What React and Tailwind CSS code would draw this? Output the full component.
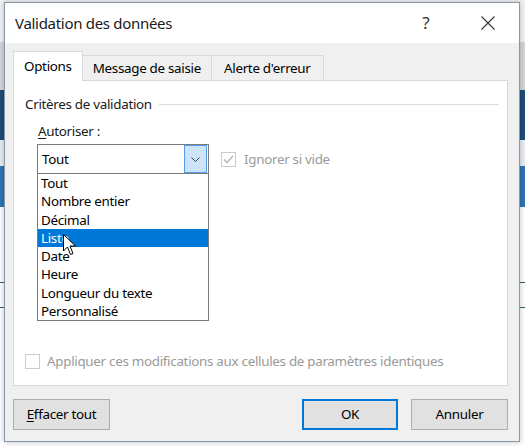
import React from 'react';

const font = { fontFamily: '"Noto Sans", "Open Sans", sans-serif' };

const items = [
  'Tout',
  'Nombre entier',
  'Décimal',
  'Liste',
  'Date',
  'Heure',
  'Longueur du texte',
  'Personnalisé',
];

const Cursor = () => (
  <svg width="14" height="22" viewBox="0 0 14 22" className="absolute left-[63px] top-[234px]">
    <path
      d="M0.5 0.5 L0.5 17 L4.5 13 L7.5 20.5 L10 19.5 L7 12 L12.5 12 Z"
      fill="#fff"
      stroke="#000"
      strokeWidth="1"
    />
  </svg>
);

const Checkbox = ({ checked }) => (
  <span className="w-[15px] h-[15px] border border-[#cccccc] bg-white flex items-center justify-center shrink-0">
    {checked && (
      <svg width="11" height="9" viewBox="0 0 11 9">
        <path d="M1 4.5 L4 7.5 L10 1" fill="none" stroke="#b5b5b5" strokeWidth="1.3" />
      </svg>
    )}
  </span>
);

export default function App() {
  return (
    <div className="relative w-[525px] h-[446px] overflow-hidden bg-white" style={font}>
      {/* spreadsheet behind the dialog */}
      <div className="flex flex-col w-full">
        <div className="h-[42px] bg-[#f3f3f3]" />
        <div className="h-[48px] bg-[#d6d6d6]" />
        <div className="h-[50px] bg-[#1e4e79]" />
        <div className="h-[26px] bg-[#e9eef3]" />
        <div className="h-[41px] bg-[#2e75b6]" />
        <div className="h-[75px] bg-white" />
        <div className="h-[1px] bg-[#2f5f6f]" />
        <div className="h-[24px] bg-white" />
        <div className="h-[1px] bg-[#2f5f6f]" />
      </div>

      {/* dialog window */}
      <div className="absolute left-[4px] top-[2px] w-[516px] h-[440px] border border-[#8796a8] bg-[#f0f0f0] flex flex-col shadow-[0_0_6px_rgba(0,0,0,0.25)]">
        <div className="h-[40px] bg-white flex items-center shrink-0">
          <span className="pl-[10px] text-[15px] text-[#1a1a1a] tracking-[-0.3px]">Validation des données</span>
          <span className="ml-auto text-[17px] text-[#333] w-[20px] text-center">?</span>
          <svg width="14" height="14" viewBox="0 0 14 14" className="ml-[45px] mr-[24px]">
            <path d="M0.5 0.5 L13.5 13.5 M13.5 0.5 L0.5 13.5" stroke="#333" strokeWidth="1.1" />
          </svg>
        </div>

        <div className="flex-1 flex flex-col pl-[8px] pr-[11px] pt-[8px]">
          {/* tabs */}
          <div className="flex items-end h-[29px] text-[13.4px] text-black tracking-[-0.3px]">
            <div className="h-[30px] px-[10px] bg-white border border-b-0 border-[#d9d9d9] flex items-center relative z-10 -mb-[1px]">
              Options
            </div>
            <div className="h-[25px] px-[10px] border-t border-r border-[#d9d9d9] bg-[#f0f0f0] flex items-center">
              Message de saisie
            </div>
            <div className="h-[25px] px-[12px] border-t border-r border-[#d9d9d9] bg-[#f0f0f0] flex items-center">
              Alerte d'erreur
            </div>
          </div>

          {/* panel */}
          <div className="h-[306px] bg-white border border-[#d9d9d9] relative flex flex-col text-[13.4px] tracking-[-0.3px]">
            <div className="flex items-center mt-[13px] pl-[11px] pr-[8px]">
              <span className="text-[#1a1a1a]">Critères de validation</span>
              <div className="flex-1 h-px bg-[#dcdcdc] ml-[7px]" />
            </div>
            <div className="pl-[24px] mt-[7px] text-[#1a1a1a]">
              <span className="underline underline-offset-2">A</span>utoriser :
            </div>
            <div className="flex items-center pl-[23px] mt-[3px]">
              <div className="w-[172px] h-[30px] border border-[#7a7a7a] bg-white flex items-center">
                <span className="pl-[4px] flex-1 text-black">Tout</span>
                <div className="w-[23px] h-[28px] bg-[#cce4f7] border border-[#569de5] flex items-center justify-center mr-[1px]">
                  <svg width="9" height="5" viewBox="0 0 9 5">
                    <path d="M0.5 0.5 L4.5 4.5 L8.5 0.5" fill="none" stroke="#444" strokeWidth="1" />
                  </svg>
                </div>
              </div>
              <div className="flex items-center ml-[12px] gap-[8px] text-[#9a9a9a]">
                <Checkbox checked />
                <span>Ignorer si vide</span>
              </div>
            </div>

            <div className="flex items-center gap-[7px] pl-[11px] mt-[177px] text-[#9a9a9a]">
              <Checkbox />
              <span>Appliquer ces modifications aux cellules de paramètres identiques</span>
            </div>

            {/* open dropdown list */}
            <div className="absolute left-[23px] top-[92px] w-[172px] h-[148px] bg-white border border-[#7a7a7a] flex flex-col">
              {items.map((it) => (
                <div
                  key={it}
                  className={
                    'h-[18.3px] leading-[18px] pl-[3px] ' +
                    (it === 'Liste' ? 'bg-[#0078d7] text-white' : 'text-black')
                  }
                >
                  {it}
                </div>
              ))}
            </div>
          </div>

          {/* buttons */}
          <div className="flex items-center mt-[13px] text-[13.4px] text-black tracking-[-0.3px]">
            <button className="w-[97px] h-[31px] bg-[#e1e1e1] border border-[#adadad]">
              <span className="underline underline-offset-2">E</span>ffacer tout
            </button>
            <button className="ml-auto w-[96px] h-[31px] bg-[#e1e1e1] border-2 border-[#0078d7]">OK</button>
            <button className="ml-[13px] w-[97px] h-[31px] bg-[#e1e1e1] border border-[#adadad]">Annuler</button>
          </div>
        </div>
      </div>

      <Cursor />
    </div>
  );
}
